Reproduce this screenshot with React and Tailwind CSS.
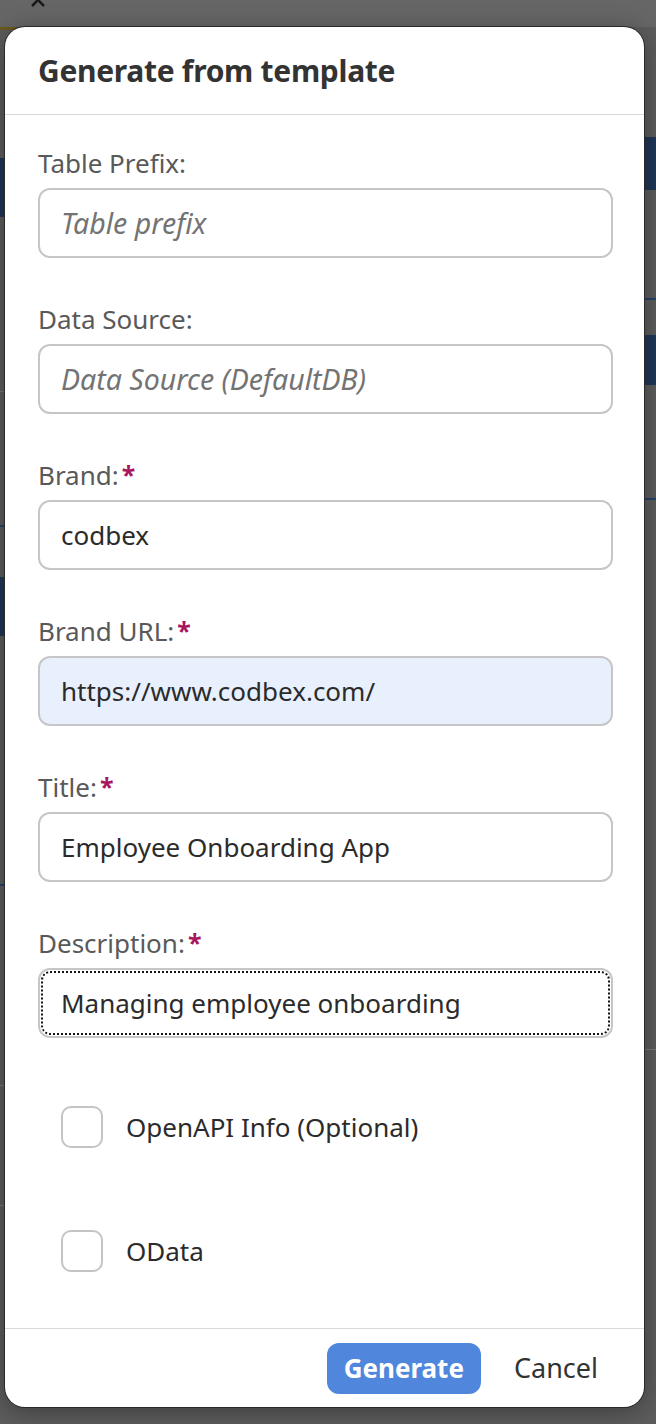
import React from 'react';

const fields = [
  { label: 'Table Prefix:', placeholder: 'Table prefix' },
  { label: 'Data Source:', placeholder: 'Data Source (DefaultDB)' },
  { label: 'Brand:', value: 'codbex', required: true },
  { label: 'Brand URL:', value: 'https://www.codbex.com/', required: true, autofill: true },
  { label: 'Title:', value: 'Employee Onboarding App', required: true },
  { label: 'Description:', value: 'Managing employee onboarding', required: true, focused: true },
];

const Field = ({ label, placeholder, value, required, autofill, focused }) => {
  let box = 'bg-white';
  if (autofill) box = 'bg-[#e8f0fd]';
  if (focused) box = 'bg-white outline-2 outline-dotted outline-[#111] outline-offset-[-5px]';

  return (
    <div className="flex flex-col">
      <label className="h-[34px] flex items-center text-[26px] text-[#595959]">
        {label}
        {required && <span className="ml-[3px] text-[#a8155f] font-bold text-[25px]">*</span>}
      </label>
      <div className={`mt-[8px] h-[70px] rounded-[12px] border-2 border-[#c6c6c6] flex items-center px-[21px] ${box}`}>
        {value ? (
          <span className="text-[26px] text-[#2b2b2b]">{value}</span>
        ) : (
          <span className="text-[28.5px] italic text-[#737373]">{placeholder}</span>
        )}
      </div>
    </div>
  );
};

const Check = ({ label }) => (
  <div className="h-[124px] flex items-center pl-[23px]">
    <div className="w-[42px] h-[42px] rounded-[10px] border-2 border-[#c4c4c4] bg-white" />
    <span className="ml-[23px] text-[26px] text-[#2b2b2b]">{label}</span>
  </div>
);

const App = () => {
  return (
    <div className="relative w-full h-[1424px] overflow-hidden bg-[#5c5c5c] font-['Noto_Sans',sans-serif]">
      {/* page behind the dim layer */}
      <div className="h-[27px] bg-[#666] relative">
        <svg className="absolute left-[28px] top-[-10px]" width="20" height="20" viewBox="0 0 20 20">
          <path d="M4 4 L16 16 M16 4 L4 16" stroke="#1a1a1a" strokeWidth="2.5" />
        </svg>
      </div>
      <div className="h-[3px] w-[55px] bg-[#6b5a20]" />
      <div className="flex justify-between">
        <div className="w-[5px] flex flex-col">
          <div className="h-[128px]" />
          <div className="h-[59px] bg-[#1f3656]" />
          <div className="h-[175px] border-b border-[#777]" />
          <div className="h-[135px] border-b-2 border-[#24406a]" />
          <div className="h-[50px]" />
          <div className="h-[59px] bg-[#1f3656]" />
          <div className="h-[250px] border-b-2 border-[#24406a]" />
          <div className="h-[200px] border-b border-[#777]" />
          <div className="h-[120px] border-b border-[#777]" />
        </div>
        <div className="w-[12px] flex flex-col">
          <div className="h-[107px]" />
          <div className="h-[53px] bg-[#1f3656]" />
          <div className="h-[110px] border-b-2 border-[#24406a]" />
          <div className="h-[35px]" />
          <div className="h-[50px] bg-[#1f3656]" />
          <div className="h-[115px] border-b-2 border-[#24406a]" />
          <div className="h-[550px] border-b border-[#777]" />
        </div>
      </div>

      {/* dialog */}
      <div className="absolute left-[5px] top-[27px] w-[639px] h-[1380px] bg-white rounded-[20px] ring-1 ring-[#2a2a2a] shadow-[0_4px_24px_rgba(0,0,0,0.35)] flex flex-col overflow-hidden">
        <div className="h-[88px] flex items-center px-[33px] border-b border-[#d9d9d9] shrink-0">
          <h1 className="text-[30px] font-bold text-[#333] tracking-[-0.3px]">Generate from template</h1>
        </div>

        <div className="flex-1 pl-[33px] pr-[31px] pt-[31px] flex flex-col">
          <div className="flex flex-col gap-[44px]">
            {fields.map((f) => (
              <Field key={f.label} {...f} />
            ))}
          </div>
          <div className="mt-[27px]">
            <Check label="OpenAPI Info (Optional)" />
            <Check label="OData" />
          </div>
        </div>

        <div className="h-[79px] shrink-0 border-t border-[#d9d9d9] flex items-center justify-end gap-[17px] pr-[30px]">
          <button className="h-[51px] px-[17px] rounded-[12px] bg-[#5087dd] text-white font-bold text-[26px]">
            Generate
          </button>
          <button className="h-[51px] px-[16px] text-[27px] text-[#333]">Cancel</button>
        </div>
      </div>
    </div>
  );
};

export default App;
